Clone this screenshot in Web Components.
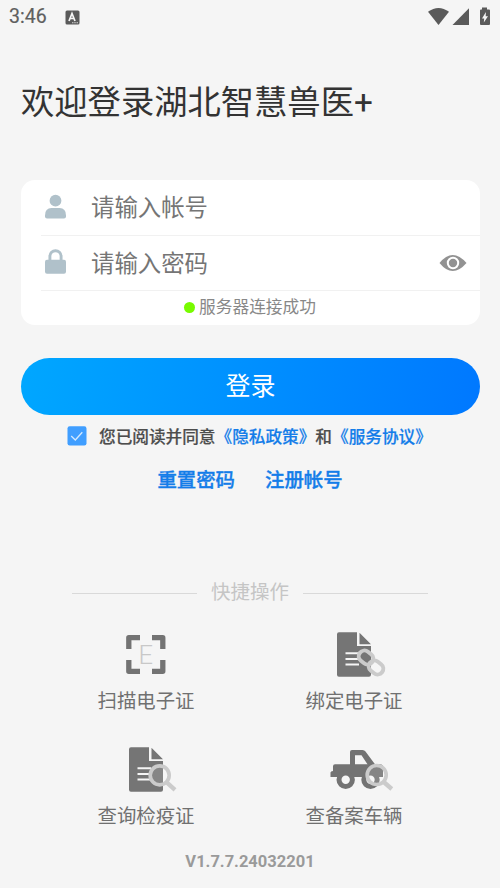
<!DOCTYPE html>
<html lang="zh-CN">
<head>
<meta charset="utf-8">
<title>登录</title>
<style>
html,body{margin:0;height:888px;overflow:hidden;background:#f5f5f5}
body{font-family:Roboto,"Noto Sans CJK SC",sans-serif;color:#333}
</style>
</head>
<body>
<login-page></login-page>
<script>
function define(name, html) {
  const t = document.createElement('template');
  t.innerHTML = html;
  customElements.define(name, class extends HTMLElement {
    constructor() {
      super();
      this.attachShadow({mode: 'open'}).appendChild(t.content.cloneNode(true));
    }
  });
}

define('status-bar', `<style>
:host{display:flex;height:34px;box-sizing:border-box;padding:0 8px 0 9px;align-items:center;color:#5f5f5f;font:400 19.500px/36px Roboto,sans-serif;-webkit-text-stroke:.2px}
svg{display:block}.a{margin-left:18px}.r{margin-left:auto}</style>
<span>3:46</span>
<svg class="a" width="15" height="15"><rect x=".5" y=".5" width="14" height="14" rx="1.5" fill="#5a5a5a"/><path d="M4 11 7 3.5 10 11M5 8.5h4" fill="none" stroke="#f5f5f5" stroke-width="1.7"/><path d="M7.2 12.8h1.2m1 0h1.2m1 0h1.2" stroke="#f5f5f5" stroke-width="1.1"/></svg>
<svg class="r" width="64" height="20" fill="#5a5a5a"><path d="M0 4.8Q10.5-2.8 21 4.8L10.5 18Z"/><path d="M41 1.3V18H24.500Z"/><path d="M54 2.500V.5h5v2h2q1 0 1 1V17q0 1-1 1h-8q-1 0-1-1V3.500q0-1 1-1Z"/><path d="M57.900 5 54 11.500h2.200L55.800 15.500 60 9.300h-2.300Z" fill="#f5f5f5"/></svg>`);

define('input-row', `<style>
:host{display:flex;align-items:center;height:55.500px;box-sizing:border-box;margin-left:20px;padding:0 13px 1px 3px;border-bottom:1.500px solid #f1f1f1;font-size:23.400px;color:#757575}
.t{margin-left:24px;line-height:34px;padding-top:3px}
.e{margin-left:auto;display:flex;padding-top:2px}
</style><slot name="icon"></slot><span class="t"><slot></slot></span><span class="e"><slot name="end"></slot></span>`);

define('login-card', `<style>
:host{display:block;height:145px;box-sizing:border-box;border-radius:14px;background:#fff;overflow:hidden}
svg{display:block}
.s{display:flex;height:32px;align-items:center;justify-content:center;gap:4px;font-size:16.700px;line-height:24px;color:#888;padding-right:1px}
.s i{width:11px;height:11px;border-radius:50%;background:#78fb00}
.s span{padding-top:2px}
</style>
<input-row><svg slot="icon" width="23" height="26" fill="#b0c1ca"><circle cx="11.500" cy="6.700" r="5.900"/><path d="M1 21.500Q1 14 7.500 14h8Q22 14 22 21.500V22.500q0 2-2 2H3q-2 0-2-2Z"/></svg>请输入帐号</input-row>
<input-row><svg slot="icon" width="23" height="26" fill="#b0c1ca"><path d="M5.900 12V7.300a5.600 5.600 0 0 1 11.200 0V12" fill="none" stroke="#b0c1ca" stroke-width="2.900"/><rect x="1" y="10.800" width="21" height="14" rx="2"/></svg>请输入密码<svg slot="end" width="28" height="18"><path d="M.5 9Q13.500-7 27.500 9 13.500 25 .5 9Z" fill="#929292"/><circle cx="14" cy="9" r="5.200" fill="#929292" stroke="#fff" stroke-width="2"/></svg></input-row>
<div class="s"><i></i><span>服务器连接成功</span></div>`);

define('primary-button', `<style>:host{display:block;height:57px;line-height:58px;border-radius:29px;background:linear-gradient(100deg,#00a7ff,#0078ff);color:#fff;text-align:center;font-size:25px}</style><slot></slot>`);

define('agree-line', `<style>
:host{display:flex;align-items:center;height:24px;font-size:16.650px;line-height:24px;font-weight:500;color:#4d4d4d;-webkit-text-stroke:.2px}
svg{margin:0 12px 1px 0;flex:none}b{font-weight:inherit;color:#147de9}span{white-space:nowrap;padding-top:3px}
</style><svg width="20" height="20"><rect x=".5" y=".2" width="19" height="19.300" rx="2.200" fill="#409eff"/><path d="M4.200 10 8.300 14 15.300 6.300" fill="none" stroke="#d4e9ff" stroke-width="1.300"/></svg><span>您已阅读并同意<b>《隐私政策》</b>和<b>《服务协议》</b></span>`);

define('link-row', `<style>:host{display:flex;justify-content:center;gap:30px;font-size:19.400px;line-height:28px;font-weight:500;color:#147de9;-webkit-text-stroke:.35px}</style><slot></slot>`);

define('section-divider', `<style>:host{display:flex;align-items:center;justify-content:center;gap:14px;font-size:19.500px;line-height:28px;color:#c5c5c5}i{width:125px;height:1px;background:#d9d9d9}</style><i></i><span><slot></slot></span><i></i>`);

define('quick-action', `<style>
:host{display:flex;flex-direction:column;align-items:center;height:115px;font-size:19.400px;line-height:28px;color:#707070}
::slotted(svg){display:block;overflow:visible;margin-bottom:8px}
</style><slot name="icon"></slot><span><slot></slot></span>`);

const lens = (x, y, hx, hy) => `<path d="M${x+7} ${y+7}L${hx} ${hy}" stroke="#cbcbcb" stroke-width="4.300"/><circle cx="${x}" cy="${y}" r="9.500" fill="#fff" fill-opacity=".13" stroke="#cbcbcb" stroke-width="3.700"/>`;
const sheet = `<path d="M15 2.300H33V16H47V44.700q0 2-2 2H15q-2 0-2-2V4.300q0-2 2-2ZM35.500 2.700 47 14.200H35.500Z" fill="#757575"/><path d="M21.500 23.200H35M21.500 28.900H34.500M21.500 34.400H35" stroke="#f5f5f5" stroke-width="2"/>`;

define('quick-grid', `<style>:host{display:grid;grid-template-columns:208px 208px;justify-content:center}</style>
<quick-action><svg slot="icon" width="60" height="50"><path d="M12.800 19V7.700H24M36 7.700H46.800V19M46.800 30V41.300H36M24 41.300H12.800V30" fill="none" stroke="#737373" stroke-width="5.300" stroke-linejoin="round"/><text x="22.500" y="34" font-family="Roboto,sans-serif" font-weight="300" font-size="25.500" fill="#c8c8c8">E</text></svg>扫描电子证</quick-action>
<quick-action><svg slot="icon" width="60" height="50">${sheet}<g fill="none" stroke="#cbcbcb" stroke-width="4"><rect x="-7.700" y="-5.700" width="15.400" height="11.400" rx="5.700" transform="translate(42 27.500) rotate(38)"/><rect x="-7.700" y="-5.700" width="15.400" height="11.400" rx="5.700" transform="translate(52 37.500) rotate(38)"/></g></svg>绑定电子证</quick-action>
<quick-action><svg slot="icon" width="60" height="50">${sheet}${lens(43.7,30.3,59,44.800)}</svg>查询检疫证</quick-action>
<quick-action><svg slot="icon" width="60" height="50"><path fill-rule="evenodd" d="M11 19.300H26V7q0-2 2-2H38.500q2 0 3 1.500L51 19.300H56q3 0 3 3V32H6.500V27.500q0-1.300 2.500-1.500V21.300q0-2 2-2ZM31 10.200V19.300H43.500L37.500 10.200Z" fill="#737373"/><circle cx="21.700" cy="34.700" r="6.700" fill="#f5f5f5" stroke="#737373" stroke-width="5"/><circle cx="46.500" cy="34.700" r="6.700" fill="#f5f5f5" stroke="#737373" stroke-width="5"/>${lens(52.7,30,67.800,44)}</svg>查备案车辆</quick-action>`);

define('login-page', `<style>
:host{display:flex;flex-direction:column;width:500px;height:888px;background:#f5f5f5;overflow:hidden}
h1{margin:45px 0 0 21px;font-size:33.300px;font-weight:400;line-height:48px;height:48px;color:#333;white-space:nowrap}
login-card{margin:53px 20px 0 21px}
primary-button{margin:33px 20px 0 21px}
agree-line{margin:9px 0 0 67px}
link-row{margin-top:19px}
section-divider{margin-top:84px}
quick-grid{margin-top:23px}
footer{margin-top:-10px;text-align:center;font-size:16.500px;line-height:24px;font-weight:700;color:#9a9a9a}
</style>
<status-bar></status-bar>
<h1>欢迎登录湖北智慧兽医+</h1>
<login-card></login-card>
<primary-button>登录</primary-button>
<agree-line></agree-line>
<link-row><span>重置密码</span><span>注册帐号</span></link-row>
<section-divider>快捷操作</section-divider>
<quick-grid></quick-grid>
<footer>V1.7.7.24032201</footer>`);
</script>
</body>
</html>
